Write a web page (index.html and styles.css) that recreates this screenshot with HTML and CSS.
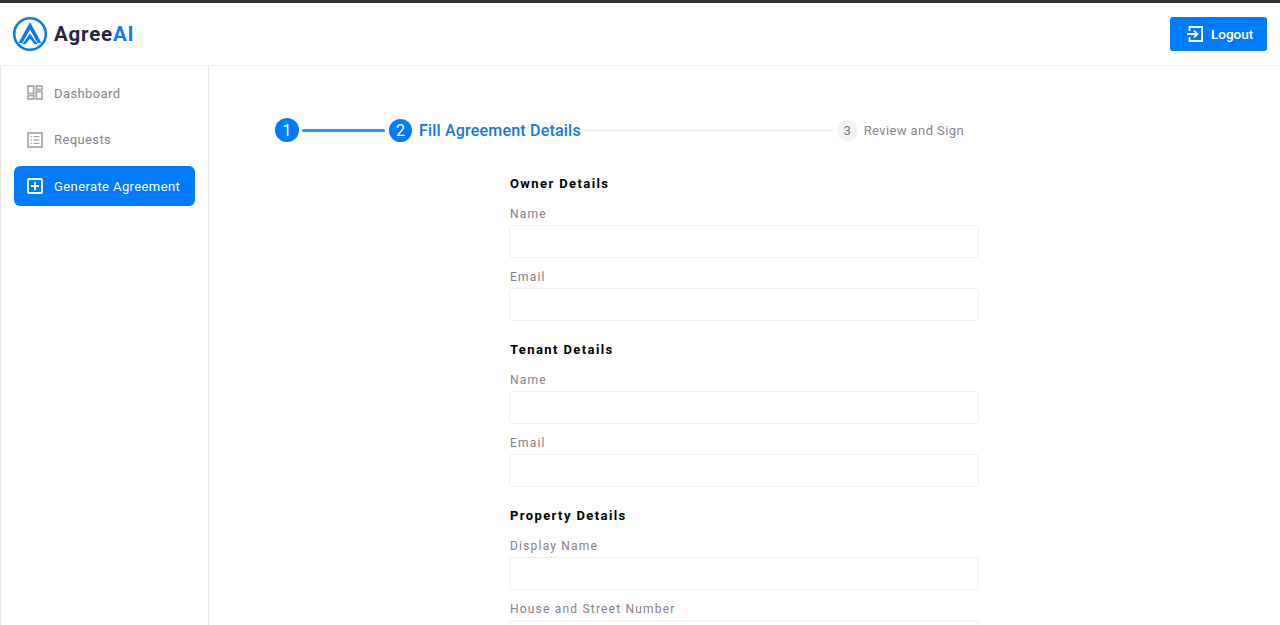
FILE: index.html
```html
<!DOCTYPE html>
<html lang="en">
<head>
<meta charset="utf-8">
<title>AgreeAI</title>
<link rel="stylesheet" href="styles.css">
</head>
<body>
<header class="topbar">
  <div class="brand">
    <svg class="logo" viewBox="0 0 36 36" width="36" height="36" aria-hidden="true">
      <circle cx="18" cy="18" r="15.8" fill="none" stroke="#0b7bf0" stroke-width="2.6"/>
      <path d="M18 6 L29.5 27 H25.6 L18 13.6 L10.4 27 H6.5 Z" fill="#0b7bf0"/>
      <path d="M18 17.5 L25.5 28 H22.6 L18 22.8 L13.4 28 H10.5 Z" fill="#0b7bf0"/>
    </svg>
    <span class="brand-name">Agree<span class="brand-ai">AI</span></span>
  </div>
  <button class="logout" type="button">
    <svg viewBox="0 0 16 16" width="16" height="16" aria-hidden="true">
      <path d="M2.5 5V1h12.6v14H2.5v-4" fill="none" stroke="#fff" stroke-width="1.8"/>
      <path d="M0 8h10M7 4.6 10.4 8 7 11.4" fill="none" stroke="#fff" stroke-width="1.8"/>
    </svg>
    <span>Logout</span>
  </button>
</header>
<div class="shell">
  <nav class="sidebar">
    <a class="nav-item">
      <svg viewBox="0 0 16 16" width="16" height="16" aria-hidden="true">
        <g fill="none" stroke="#a9a9b1" stroke-width="1.8">
          <rect x="1" y="1" width="5.7" height="7.5"/><rect x="9.3" y="1" width="5.7" height="3.5"/>
          <rect x="1" y="10.5" width="5.7" height="3.5"/><rect x="9.3" y="6.5" width="5.7" height="7.5"/>
        </g>
      </svg>
      <span>Dashboard</span>
    </a>
    <a class="nav-item">
      <svg viewBox="0 0 16 16" width="16" height="16" aria-hidden="true">
        <rect x="1" y="1" width="14" height="14" fill="none" stroke="#a9a9b1" stroke-width="1.8"/>
        <path d="M3.5 4.7h1.6M6.5 4.7h6M3.5 8h1.6M6.5 8h6M3.5 11.3h1.6M6.5 11.3h6" stroke="#a9a9b1" stroke-width="1.3"/>
      </svg>
      <span>Requests</span>
    </a>
    <a class="nav-item active">
      <svg viewBox="0 0 16 16" width="16" height="16" aria-hidden="true">
        <rect x="1" y="1" width="14" height="14" rx="1" fill="none" stroke="#fff" stroke-width="1.8"/>
        <path d="M8 4v8M4 8h8" stroke="#fff" stroke-width="1.8"/>
      </svg>
      <span>Generate Agreement</span>
    </a>
  </nav>
  <main class="content">
    <ol class="steps">
      <li class="step"><span class="dot">1</span></li>
      <li class="rail rail-done"></li>
      <li class="step"><span class="dot dot-now">2</span><span class="step-label">Fill Agreement Details</span></li>
      <li class="rail"></li>
      <li class="step step-todo"><span class="dot">3</span><span class="step-label">Review and Sign</span></li>
    </ol>
    <form class="form">
      <section class="group">
        <h2>Owner Details</h2>
        <label class="field"><span>Name</span><input type="text"></label>
        <label class="field"><span>Email</span><input type="text"></label>
      </section>
      <section class="group">
        <h2>Tenant Details</h2>
        <label class="field"><span>Name</span><input type="text"></label>
        <label class="field"><span>Email</span><input type="text"></label>
      </section>
      <section class="group">
        <h2>Property Details</h2>
        <label class="field"><span>Display Name</span><input type="text"></label>
        <label class="field"><span>House and Street Number</span><input type="text"></label>
      </section>
    </form>
  </main>
</div>
</body>
</html>
```
FILE: styles.css
```css
* { box-sizing: border-box; }
html, body { height: 100%; margin: 0; overflow: hidden; }
body {
  display: flex;
  flex-direction: column;
  background: #fff;
  font-family: Roboto, "Liberation Sans", sans-serif;
  border-top: 3px solid #333;
}
.topbar {
  flex: none;
  height: 63px;
  display: flex;
  align-items: center;
  justify-content: space-between;
  padding: 0 13px 0 12px;
  border-bottom: 1px solid #eeeeee;
}
.brand { display: flex; align-items: center; gap: 6px; }
.logo { display: block; }
.brand-name { font-size: 20.5px; font-weight: 700; letter-spacing: 0.8px; color: #25253f; }
.brand-ai { color: #1677e8; }
.logout {
  width: 97px;
  height: 34px;
  display: flex;
  align-items: center;
  gap: 8px;
  padding: 0 0 0 17px;
  border: 0;
  border-radius: 3px;
  background: #007bff;
  color: #fff;
  font: 500 13.5px Roboto, sans-serif;
}
.shell { flex: 1; display: flex; min-height: 0; }
.sidebar {
  flex: none;
  width: 209px;
  padding: 7px 13px 0 13px;
  border-left: 1px solid #e6e6e6;
  border-right: 1px solid #e6e6e6;
  display: flex;
  flex-direction: column;
  gap: 6.5px;
}
.nav-item {
  height: 40px;
  display: flex;
  align-items: center;
  gap: 11px;
  padding-left: 13px;
  border-radius: 6px;
  color: #84848c;
  font-size: 13px;
  letter-spacing: 0.4px;
}
.nav-item svg { flex: none; }
.nav-item.active { background: #007bff; color: #fff; }
.content { flex: 1; min-width: 0; padding: 52px 0 0 66px; }
.steps {
  list-style: none;
  margin: 0;
  padding: 0;
  width: 689px;
  display: flex;
  align-items: center;
}
.step { display: flex; align-items: center; gap: 7px; flex: none; }
.dot {
  width: 24px;
  height: 24px;
  border-radius: 50%;
  background: #007bff;
  color: #fff;
  display: flex;
  align-items: center;
  justify-content: center;
  font-size: 16px;
}
.dot-now { width: 23px; height: 23px; }
.step-label { font-size: 16px; font-weight: 500; color: #1677e8; letter-spacing: 0.2px; }
.rail { flex: 1; height: 3px; margin: 0 3px; border-radius: 2px; background: #f2f2f4; }
.rail-done { flex: none; width: 83px; margin-right: 4px; background: #2b93f7; }
.step-todo { gap: 6px; }
.step-todo .dot { width: 21px; height: 21px; background: #f3f3f4; color: #75757d; font-size: 13px; }
.step-todo .step-label { font-size: 13px; font-weight: 400; color: #84848c; letter-spacing: 0.4px; }
.form { width: 470px; margin: 32px 0 0 234px; }
.group { margin-bottom: 19.2px; }
.group h2 {
  margin: 0;
  padding-left: 1px;
  font-size: 13px;
  line-height: 20px;
  font-weight: 700;
  letter-spacing: 1.4px;
  color: #000;
}
.field { display: block; }
.group h2 + .field { margin-top: 13.4px; }
.field + .field { margin-top: 12.6px; }
.field span {
  display: block;
  padding-left: 1px;
  font-size: 12px;
  line-height: 14px;
  letter-spacing: 1.2px;
  color: #85808a;
  margin-bottom: 3.4px;
}
.field input {
  display: block;
  width: 100%;
  height: 33px;
  border: 1px solid #eeeeee;
  border-radius: 4px;
  background: #fff;
  outline: 0;
}
```
